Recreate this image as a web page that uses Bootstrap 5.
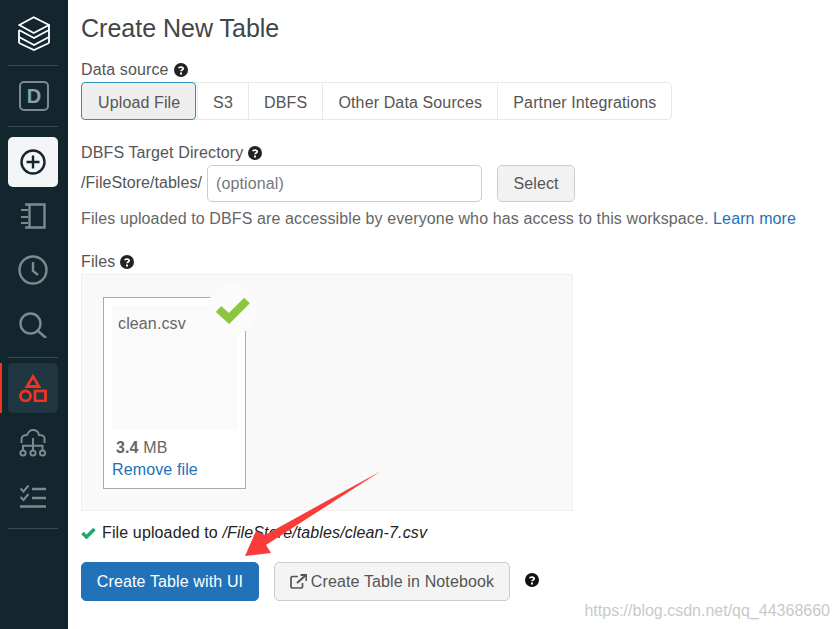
<!DOCTYPE html>
<html lang="en">
<head>
<meta charset="utf-8">
<title>Create New Table</title>
<link href="https://cdn.jsdelivr.net/npm/bootstrap@5.3.0/dist/css/bootstrap.min.css" rel="stylesheet">
<style>
html,body{height:100%;}
body{font-family:"Liberation Sans",Arial,sans-serif;font-size:16px;letter-spacing:.125px;color:#555;background:#fff;overflow:hidden;position:relative;line-height:20px;}
.shell{height:629px;}
.rail{width:68px;flex:none;background:#13252d;padding-top:13px;}
.rail-item{width:50px;height:50px;margin:0 8px 4px;color:#7c8a90;}
.rail-sep{height:1px;width:50px;margin:0 8px;background:#3a4b52;}
.rail-top{height:38px;margin-bottom:14px;color:#fff;}
.rail-d{margin:15px 8px 15px;height:30px;color:#7c8a90;}
.rail-create{background:#f4f5f6;border-radius:5px;color:#13252d;margin-top:10px;}
.rail-active{background:#203640;border-radius:5px;color:#f0341f;margin-bottom:0;}
.rail-search{margin-bottom:8px;}
.rail-wrap{position:relative;margin:5px 0;}
.rail-mark{position:absolute;left:0;top:0;width:2px;height:50px;background:#f0341f;}
.rail-list{margin-bottom:6px;}
.pane{flex:1;padding:0 0 0 13px;min-width:0;}
.page-title{font-size:25px;letter-spacing:0;font-weight:400;line-height:28px;color:#3f4548;margin:14px 0 0 0;}
.lab{color:#555;display:flex;align-items:center;gap:5px;height:20px;}
.lab-ds{margin-top:18px;}
.tabs-box{display:inline-flex;border:1px solid #e8e8e8;border-radius:5px;height:38px;margin-top:2px;}
.tab-one{padding:0 15.1px;line-height:38px;border-left:1px solid #e8e8e8;color:#555;margin:1px 0;height:36px;}
.tab-on{background:#eee;border:1px solid #2f8fb4;border-radius:4px;margin:-1px 1px -1px -1px;padding:0 16px;line-height:40px;width:115px;height:38px;white-space:nowrap;color:#555;}
.lab-dir{margin-top:23px;}
.dir-row{margin-top:2px;height:37px;}
.dir-prefix{width:126px;line-height:36px;white-space:nowrap;letter-spacing:.05px;}
.dir-input{width:275px;height:37px;border:1px solid #ccc;border-radius:5px;padding:0 8px;font-size:16px;color:#555;font-family:inherit;letter-spacing:inherit;margin:0;}
.dir-input::placeholder{color:#777;opacity:1;}
.btn-sel{margin-left:15px;width:78px;height:37px;background:#f2f2f2;border:1px solid #ccc;border-radius:5px;color:#555;font-size:16px;padding:0;letter-spacing:inherit;}
.hint{margin-top:7px;white-space:nowrap;color:#666;letter-spacing:.114px;}
.hint a,.rm-link{color:#2272b9;text-decoration:none;}
.lab-files{margin-top:23px;}
.drop{width:492px;height:237px;margin-top:2px;background:#f9f9f9;border:1px solid #eee;padding:22px 0 0 21px;position:relative;}
.file-box{width:143px;height:192px;background:#fff;border:1px solid #aaa;padding:7px 8px 0 8px;}
.file-thumb{width:125px;height:125px;background:#fafafa;padding:9px 6px 0 6px;color:#666;}
.file-size{padding:8px 0 0 4px;height:30px;line-height:20px;color:#666;}
.ok-disc{position:absolute;left:125px;top:10px;width:50px;height:50px;border-radius:50%;background:#fbfbfb;}
.up-msg{margin-top:12px;height:20px;color:#222;gap:6px;}
.up-msg em{font-style:italic;}
.act-row{margin-top:19px;height:39px;}
.btn-ui{width:178px;height:39px;background:#2272b9;border:1px solid #2272b9;border-radius:5px;color:#fff;font-size:16px;padding:0;letter-spacing:inherit;}
.btn-nb{width:236px;height:39px;margin-left:15px;background:#f4f4f4;border:1px solid #ccc;border-radius:5px;color:#555;font-size:16px;padding:0;gap:4px;letter-spacing:inherit;}
.q-after{margin:0 0 3px 15px;}
.arrow-over{position:absolute;left:240px;top:465px;pointer-events:none;}
.mark-over{position:absolute;right:8px;top:601px;color:#c9c9c9;font-size:16px;letter-spacing:0;line-height:20px;white-space:nowrap;}
.d-glyph{font-family:"Liberation Sans",Arial,sans-serif;font-weight:700;font-size:20px;letter-spacing:0;}
</style>
</head>
<body>
<div class="d-flex shell">
  <nav class="rail d-flex flex-column">
    <div class="d-flex justify-content-center rail-top">
      <svg width="32" height="38" viewBox="0 0 32 38" fill="none" stroke="currentColor" stroke-width="1.800" stroke-linejoin="miter">
        <path d="M1.300 12 15.700 4.300 31 12 15.700 20Z"/><path d="M1 17 16 25 31 17"/><path d="M1 24 16 32 31 24"/><path d="M1 30 16 37 31 30"/><path d="M1 17V30M31 12V30"/>
      </svg>
    </div>
    <div class="rail-sep"></div>
    <div class="d-flex justify-content-center rail-d">
      <svg width="30" height="30" viewBox="0 0 30 30" fill="none"><rect x="1" y="1" width="28" height="28" rx="4" stroke="currentColor" stroke-width="2"/><text class="d-glyph" x="15" y="22" text-anchor="middle" fill="#87a2b0">D</text></svg>
    </div>
    <div class="rail-sep"></div>
    <div class="rail-item rail-create d-flex align-items-center justify-content-center">
      <svg width="26" height="26" viewBox="0 0 26 26" fill="none" stroke="currentColor" stroke-width="2.400"><circle cx="13" cy="13" r="11.500"/><path d="M13 6.500v13M6.500 13h13"/></svg>
    </div>
    <div class="rail-item d-flex align-items-center justify-content-center">
      <svg width="26" height="26" viewBox="0 0 26 26" fill="none" stroke="currentColor" stroke-width="2.400"><path d="M5 1.500h19.500v23H5M9.500 1.500v23"/><path d="M1 7h7M1 14h7M1 20h7" stroke-width="2.200"/></svg>
    </div>
    <div class="rail-item d-flex align-items-center justify-content-center">
      <svg width="30" height="30" viewBox="0 0 30 30" fill="none" stroke="currentColor" stroke-width="2.400"><circle cx="15" cy="15" r="13.500"/><path d="M15 7v9l5 4"/></svg>
    </div>
    <div class="rail-item rail-search d-flex align-items-center justify-content-center">
      <svg width="28" height="28" viewBox="0 -2 28 28" fill="none" stroke="currentColor" stroke-width="2.400"><circle cx="11.500" cy="11.500" r="10"/><path d="M19 19l8 7"/></svg>
    </div>
    <div class="rail-sep"></div>
    <div class="rail-wrap">
      <div class="rail-mark"></div>
      <div class="rail-item rail-active d-flex align-items-center justify-content-center">
        <svg width="28" height="28" viewBox="0 0 28 28" fill="none" stroke="currentColor" stroke-width="2.800"><path d="M14 2.500 20 12.500H8Z"/><circle cx="6.500" cy="22" r="5"/><rect x="16" y="17" width="10.500" height="10"/></svg>
      </div>
    </div>
    <div class="rail-item d-flex align-items-center justify-content-center">
      <svg width="28" height="28" viewBox="0 0 28 28" fill="none" stroke="currentColor" stroke-width="2"><path d="M2.500 14V10Q3 6 8 6 10 1 14 1 19 1 20 6 26 6 25.500 10V14"/><path d="M4 21v-4.300h19.500V21M14 9v12"/><circle cx="4" cy="24" r="2.600"/><circle cx="14" cy="24" r="2.600"/><circle cx="23.500" cy="24" r="2.600"/></svg>
    </div>
    <div class="rail-item rail-list d-flex align-items-center justify-content-center">
      <svg width="28" height="26" viewBox="0 0 28 26" fill="none" stroke="currentColor" stroke-width="2.400"><path d="M1.500 4.500l3 3 5-6M1.500 13l3 3 5-6" stroke-width="2"/><path d="M13 5h14M13 14h14M1 22.500h26"/></svg>
    </div>
    <div class="rail-sep"></div>
  </nav>
  <main class="pane">
    <h1 class="page-title">Create New Table</h1>
    <div class="lab lab-ds">Data source
      <svg width="14" height="14" viewBox="0 0 14 14"><circle cx="7" cy="7" r="7" fill="#222"/><path d="M4.800 5.300C4.900 3.900 9.200 3.500 9.200 5.500 9.200 7 7 6.800 7 8.300" fill="none" stroke="#fff" stroke-width="1.700"/><rect x="6" y="9.500" width="2" height="2" fill="#fff"/></svg>
    </div>
    <div class="tabs-box">
      <div class="tab-on">Upload File</div>
      <div class="tab-one">S3</div>
      <div class="tab-one">DBFS</div>
      <div class="tab-one">Other Data Sources</div>
      <div class="tab-one">Partner Integrations</div>
    </div>
    <div class="lab lab-dir">DBFS Target Directory
      <svg width="14" height="14" viewBox="0 0 14 14"><circle cx="7" cy="7" r="7" fill="#222"/><path d="M4.800 5.300C4.900 3.900 9.200 3.500 9.200 5.500 9.200 7 7 6.800 7 8.300" fill="none" stroke="#fff" stroke-width="1.700"/><rect x="6" y="9.500" width="2" height="2" fill="#fff"/></svg>
    </div>
    <div class="d-flex dir-row">
      <div class="dir-prefix">/FileStore/tables/</div>
      <input class="dir-input" type="text" placeholder="(optional)">
      <button class="btn btn-sel" type="button">Select</button>
    </div>
    <div class="hint">Files uploaded to DBFS are accessible by everyone who has access to this workspace. <a href="#">Learn more</a></div>
    <div class="lab lab-files">Files
      <svg width="14" height="14" viewBox="0 0 14 14"><circle cx="7" cy="7" r="7" fill="#222"/><path d="M4.800 5.300C4.900 3.900 9.200 3.500 9.200 5.500 9.200 7 7 6.800 7 8.300" fill="none" stroke="#fff" stroke-width="1.700"/><rect x="6" y="9.500" width="2" height="2" fill="#fff"/></svg>
    </div>
    <div class="drop">
      <div class="file-box">
        <div class="file-thumb">clean.csv</div>
        <div class="file-size"><b>3.4</b> MB</div>
        <a class="rm-link" href="#">Remove file</a>
      </div>
      <div class="ok-disc d-flex align-items-center justify-content-center">
        <svg width="36" height="28" viewBox="0 0 36 28"><path d="M4.500 13 15 22.500 33 4.500" fill="none" stroke="#8cc63f" stroke-width="8"/></svg>
      </div>
    </div>
    <div class="up-msg d-flex align-items-center">
      <svg width="15" height="12" viewBox="0 0 15 12"><path d="M1.500 6 5.500 10 13.500 2" fill="none" stroke="#1ea868" stroke-width="3.500"/></svg>
      <span>File uploaded to <em>/FileStore/tables/clean-7.csv</em></span>
    </div>
    <div class="d-flex align-items-center act-row">
      <button class="btn btn-ui" type="button">Create Table with UI</button>
      <button class="btn btn-nb d-flex align-items-center justify-content-center" type="button">
        <svg width="17" height="15" viewBox="0 0 17 15" fill="none" stroke="#555" stroke-width="1.700"><path d="M8 2.500H2.500A1.500 1.500 0 0 0 1 4v8.500A1.500 1.500 0 0 0 2.500 14H11a1.500 1.500 0 0 0 1.500-1.500V9"/><path d="M7 9 15.500 1.500" stroke-width="2"/><path d="M10.500 1h6v6" stroke-width="2"/></svg>
        Create Table in Notebook
      </button>
      <svg class="q-after" width="14" height="14" viewBox="0 0 14 14"><circle cx="7" cy="7" r="7" fill="#111"/><path d="M4.800 5.300C4.900 3.900 9.200 3.500 9.200 5.500 9.200 7 7 6.800 7 8.300" fill="none" stroke="#fff" stroke-width="1.700"/><rect x="6" y="9.500" width="2" height="2" fill="#fff"/></svg>
    </div>
  </main>
</div>
<svg class="arrow-over" width="150" height="95" viewBox="0 0 150 95"><path d="M141 6 25 70 16 66 5 91 31 88 26 80Z" fill="#fb3a3a"/></svg>
<div class="mark-over">https://blog.csdn.net/qq_44368660</div>
<script src="https://cdn.jsdelivr.net/npm/bootstrap@5.3.0/dist/js/bootstrap.bundle.min.js"></script>
</body>
</html>
